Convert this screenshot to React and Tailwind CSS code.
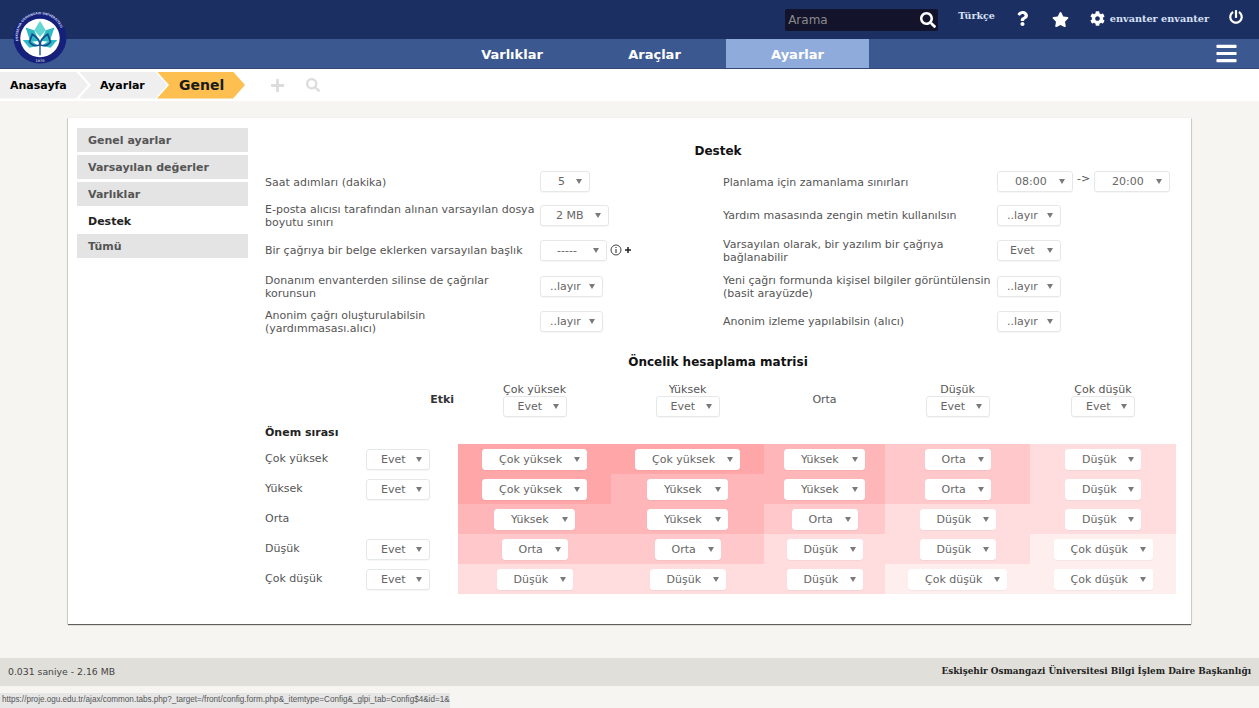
import React from "react";
import { FaQuestion, FaStar, FaCog, FaPowerOff, FaSearch, FaBars, FaPlus } from "react-icons/fa";

const C = { VH: "bg-[#ffa6a8]", H: "bg-[#ffb6b8]", M: "bg-[#ffc8ca]", L: "bg-[#ffdcde]", VL: "bg-[#ffeeee]" };
const T = { VH: "Çok yüksek", H: "Yüksek", M: "Orta", L: "Düşük", VL: "Çok düşük" };
const W = { VH: "w-[105px]", H: "w-[81px]", M: "w-[66px]", L: "w-[76px]", VL: "w-[99px]" };
const matrix = [
  ["VH", "VH", "H", "M", "L"],
  ["VH", "H", "H", "M", "L"],
  ["H", "H", "M", "L", "L"],
  ["M", "M", "L", "L", "VL"],
  ["L", "L", "L", "VL", "VL"],
];
const rowNames = ["Çok yüksek", "Yüksek", "Orta", "Düşük", "Çok düşük"];

function Arrow() {
  return (
    <svg width="6" height="5" viewBox="0 0 6 5" className="shrink-0 ml-auto">
      <path d="M0 0 L6 0 L3 5 Z" fill="#7a7a7a" />
    </svg>
  );
}

function Sel({ label, w, pl = "pl-[14px]", pr = "pr-[7px]", border = "border-[#e6e8e8]" }) {
  return (
    <div className={`${w} h-[21px] ${pl} ${pr} ${border} flex items-center shrink-0 bg-white border rounded-[3px] shadow-[0_1px_1px_rgba(0,0,0,0.04)] text-[11px] text-[#666] whitespace-nowrap`}>
      <span className="pt-[2px]">{label}</span>
      <Arrow />
    </div>
  );
}

function Row({ className, a, b, c, d }) {
  return (
    <div className={`grid grid-cols-[275px_183px_274px_179px] items-center ${className}`}>
      <div className="pr-1 pt-[1px] leading-[13px]">{a}</div>
      <div className="flex items-center">{b}</div>
      <div className="pt-[1px] leading-[13px]">{c}</div>
      <div className="flex items-center">{d}</div>
    </div>
  );
}

function Logo() {
  return (
    <svg width="54" height="52" viewBox="0 0 56 54" className="absolute left-[13px] top-[12px]">
      <defs>
        <path id="ringText" d="M5.5 30 A23 23 0 1 1 50.5 30" />
      </defs>
      <ellipse cx="28" cy="27" rx="27.5" ry="26.5" fill="#14207a" />
      <ellipse cx="28" cy="27" rx="20.5" ry="20" fill="#ffffff" />
      <text fill="#cfd6f2" fontSize="3.2" fontWeight="700" fontFamily="'DejaVu Sans', sans-serif">
        <textPath href="#ringText">ESKİŞEHİR OSMANGAZİ ÜNİVERSİTESİ</textPath>
      </text>
      <text x="28" y="51.5" textAnchor="middle" fill="#ffffff" fontSize="3.6" fontFamily="'DejaVu Sans', sans-serif">1970</text>
      <path d="M28 9 L34 19 L28 26 L22 19 Z" fill="#63d6d2" />
      <path d="M13 16 L22 19 L27 30 L18 31 Z" fill="#2fb9c4" />
      <path d="M43 16 L34 19 L29 30 L38 31 Z" fill="#2fb9c4" />
      <path d="M10 29 L18 29 L26 35 L17 37 Z" fill="#2fb9c4" />
      <path d="M46 29 L38 29 L30 35 L39 37 Z" fill="#2fb9c4" />
      <path d="M20 23 Q28 28 28 34 Q21 37 17 31 Z M36 23 Q28 28 28 34 Q35 37 39 31 Z" fill="none" stroke="#14508e" strokeWidth="1.8" />
      <path d="M28 30 V45" stroke="#14508e" strokeWidth="1.4" />
    </svg>
  );
}

export default function App() {
  const serif = "font-['DejaVu_Serif',serif] font-bold";
  return (
    <div className="relative h-screen overflow-hidden flex flex-col bg-[#f6f5f1] font-['DejaVu_Sans',sans-serif] text-[11px] text-[#555]">
      <header className="relative shrink-0">
        <div className="h-[39px] bg-[#1c2f63] flex items-center justify-end text-white">
          <div className="w-[153px] h-[22px] bg-[#13132b] rounded-[2px] flex items-center pl-[3px] pr-[2px] text-[#8a8a8a] text-[12px]">
            <span>Arama</span>
            <FaSearch className="ml-auto text-white text-[16px]" />
          </div>
          <span className={`${serif} ml-[20px] text-[9.5px] text-[#d8e2f5] -mt-[6px]`}>Türkçe</span>
          <FaQuestion className="ml-[20px] text-[15px] -mt-[2px]" />
          <FaStar className="ml-[22px] text-[17px] -mt-[1px]" />
          <FaCog className="ml-[21px] text-[15px] -mt-[3px]" />
          <span className={`${serif} ml-[5px] text-[9.7px] text-[#d8e2f5]`}>envanter envanter</span>
          <FaPowerOff className="ml-[20px] mr-[16px] text-[14px] -mt-[5px]" />
        </div>
        <nav className="h-[30px] bg-[#3c5890] border-b border-[#33497a] flex items-stretch pl-[441px] text-white font-bold text-[13px]">
          <div className="w-[142px] flex items-center justify-center pt-[3px]">Varlıklar</div>
          <div className="w-[143px] flex items-center justify-center pt-[3px]">Araçlar</div>
          <div className="w-[143px] bg-[#8fabdb] flex items-center justify-center pt-[3px]">Ayarlar</div>
          <FaBars className="ml-auto mr-[21px] self-center text-[23px]" />
        </nav>
        <Logo />
      </header>

      <div className="h-[32px] shrink-0 bg-white flex items-center text-black font-bold">
        <div className="h-[27px] w-[88px] bg-[#efefef] flex items-center pl-[10px] pt-[2px] [clip-path:polygon(0_0,76px_0,88px_50%,76px_100%,0_100%)]">Anasayfa</div>
        <div className="h-[27px] w-[88px] -ml-[9px] bg-[#efefef] flex items-center pl-[21px] pt-[2px] [clip-path:polygon(0_0,76px_0,88px_50%,76px_100%,0_100%,12px_50%)]">Ayarlar</div>
        <div className="h-[27px] w-[88px] -ml-[10px] bg-[#fdbf50] flex items-center pl-[22px] pt-[1px] text-[14px] text-[#1a1a1a] [clip-path:polygon(0_0,76px_0,88px_50%,76px_100%,0_100%,12px_50%)]">Genel</div>
        <FaPlus className="ml-[25px] text-[15px] text-[#dcdcdc]" />
        <FaSearch className="ml-[21px] text-[14px] text-[#dcdcdc]" />
      </div>

      <main className="ml-[68px] mt-[17px] w-[1123px] h-[506px] shrink-0 bg-white shadow-[0_1px_1px_rgba(0,0,0,0.6),1px_0_1px_rgba(0,0,0,0.08),-1px_0_1px_rgba(0,0,0,0.08)] flex">
        <aside className="ml-[9px] mt-[10px] w-[171px] shrink-0 font-bold text-[#555]">
          <div className="h-[24px] mb-[3px] pl-[11px] pt-[2px] flex items-center bg-[#e4e4e4]">Genel ayarlar</div>
          <div className="h-[24px] mb-[3px] pl-[11px] pt-[2px] flex items-center bg-[#e4e4e4]">Varsayılan değerler</div>
          <div className="h-[24px] mb-[3px] pl-[11px] pt-[2px] flex items-center bg-[#e4e4e4]">Varlıklar</div>
          <div className="h-[25px] pl-[11px] pt-[2px] flex items-center text-[#222]">Destek</div>
          <div className="h-[24px] pl-[11px] pt-[2px] flex items-center bg-[#e4e4e4]">Tümü</div>
        </aside>

        <section className="ml-[17px] w-[911px] pt-[22px]">
          <div className="h-[20px] pr-[5px] pt-[2px] flex items-center justify-center font-bold text-[12px] text-[#111]">Destek</div>
          <div className="h-[5px]" />
          <Row className="h-[33px]" a="Saat adımları (dakika)" b={<Sel label="5" w="w-[50px]" pl="pl-[17px]" />} c="Planlama için zamanlama sınırları"
            d={<><Sel label="08:00" w="w-[76px]" pl="pl-[17px]" /><span className="w-[21px] text-center -mt-[4px]">-&gt;</span><Sel label="20:00" w="w-[76px]" pl="pl-[17px]" /></>} />
          <Row className="h-[34px]" a="E-posta alıcısı tarafından alınan varsayılan dosya boyutu sınırı" b={<Sel label="2 MB" w="w-[69px]" pl="pl-[15px]" />} c="Yardım masasında zengin metin kullanılsın" d={<Sel label="..layır" w="w-[64px]" pl="pl-[9px]" />} />
          <Row className="h-[36px]" a="Bir çağrıya bir belge eklerken varsayılan başlık"
            b={<><Sel label="-----" w="w-[67px]" pl="pl-[16px]" /><svg width="26" height="12" viewBox="0 0 26 12" className="ml-[3px]"><circle cx="6" cy="6" r="5" fill="none" stroke="#444" strokeWidth="1" /><path d="M6 5 V9 M6 3 V4" stroke="#444" strokeWidth="1.2" /><path d="M15 6 H21 M18 3 V9" stroke="#222" strokeWidth="1.5" /></svg></>}
            c="Varsayılan olarak, bir yazılım bir çağrıya bağlanabilir" d={<Sel label="Evet" w="w-[64px]" pl="pl-[12px]" />} />
          <Row className="h-[36px]" a={<span className="block w-[230px]">Donanım envanterden silinse de çağrılar korunsun</span>} b={<Sel label="..layır" w="w-[63px]" pl="pl-[9px]" />} c="Yeni çağrı formunda kişisel bilgiler görüntülensin (basit arayüzde)" d={<Sel label="..layır" w="w-[64px]" pl="pl-[9px]" />} />
          <Row className="h-[34px]" a={<span className="block w-[200px]">Anonim çağrı oluşturulabilsin (yardımmasası.alıcı)</span>} b={<Sel label="..layır" w="w-[63px]" pl="pl-[9px]" />} c="Anonim izleme yapılabilsin (alıcı)" d={<Sel label="..layır" w="w-[64px]" pl="pl-[9px]" />} />

          <div className="mt-[13px] h-[20px] pr-[5px] pt-[2px] flex items-center justify-center font-bold text-[12px] text-[#111]">Öncelik hesaplama matrisi</div>

          <div className="mt-[9px] grid grid-cols-[101px_92px_153px_153px_121px_145px_146px] grid-rows-[38px_26px_repeat(5,30px)]">
            <div className="col-span-2 flex items-center justify-end pr-[4px] pt-[2px] font-bold text-[#333]">Etki</div>
            {[["Çok yüksek", "Evet"], ["Yüksek", "Evet"], ["Orta", null], ["Düşük", "Evet"], ["Çok düşük", "Evet"]].map(([n, s], i) => (
              <div key={i} className="flex flex-col items-center justify-center">
                <span className="leading-[13px] pt-[1px]">{n}</span>
                {s && <Sel label={s} w="w-[64px]" />}
              </div>
            ))}
            <div className="col-span-7 flex items-end pb-[3px] font-bold text-[#222]">Önem sırası</div>
            {matrix.map((row, r) => (
              <React.Fragment key={r}>
                <div className="flex items-center pt-[1px]">{rowNames[r]}</div>
                <div className="flex items-center">{r !== 2 && <Sel label="Evet" w="w-[64px]" />}</div>
                {row.map((v, c) => (
                  <div key={c} className={`flex items-center justify-center ${C[v]}`}>
                    <Sel label={T[v]} w={W[v]} pl="pl-[16px]" pr="pr-[6px]" border="border-white" />
                  </div>
                ))}
              </React.Fragment>
            ))}
          </div>
        </section>
      </main>

      <footer className="mt-[34px] h-[28px] shrink-0 bg-[#e0dfda] flex items-center justify-between px-[8px] text-[9.3px] text-[#444]">
        <span>0.031 saniye - 2.16 MB</span>
        <span className={`${serif} text-[8.85px] text-[#222]`}>Eskişehir Osmangazi Üniversitesi Bilgi İşlem Daire Başkanlığı</span>
      </footer>

      <div className="absolute left-0 bottom-0 h-[15px] w-[450px] bg-[#e6e6e6] flex items-center pl-[2px] text-[8.15px] text-[#555] whitespace-nowrap font-['Liberation_Sans',sans-serif]">
        https://proje.ogu.edu.tr/ajax/common.tabs.php?_target=/front/config.form.php&amp;_itemtype=Config&amp;_glpi_tab=Config$4&amp;id=1&amp;
      </div>
    </div>
  );
}
